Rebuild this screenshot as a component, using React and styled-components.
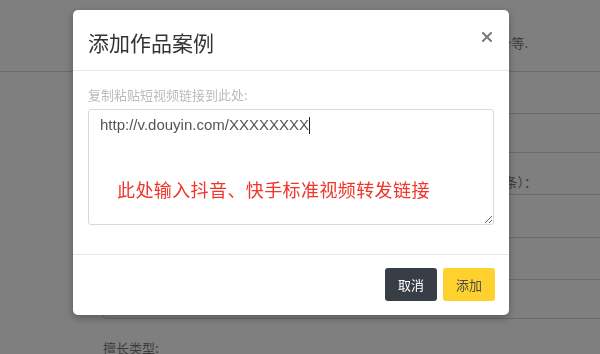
import React from 'react';
import styled, { createGlobalStyle } from 'styled-components';

const GlobalStyle = createGlobalStyle`
  html, body {
    margin: 0;
    padding: 0;
    background: #fff;
  }
  body {
    font-family: "Noto Sans CJK SC", "Liberation Sans", sans-serif;
  }
`;

const Page = styled.div`
  width: 600px;
  height: 354px;
  overflow: hidden;
  background: #fff;
`;

const PageHeader = styled.div`
  padding: 6px 0 19px;
  border-bottom: 1px solid #d6d6d6;
`;

const PageTitle = styled.div`
  padding-left: 353px;
  font-size: 18px;
  line-height: 24px;
  font-weight: bold;
  color: #444;
`;

const PageDesc = styled.div`
  margin-top: 4px;
  padding-right: 72px;
  text-align: right;
  font-size: 13px;
  line-height: 18px;
  color: #777;
  white-space: nowrap;
`;

const Form = styled.div`
  padding-left: 103px;
`;

const FieldLabel = styled.div`
  display: flex;
  justify-content: ${(p) => (p.$width ? 'flex-end' : 'flex-start')};
  width: ${(p) => (p.$width ? `${p.$width}px` : 'auto')};
  height: 41px;
  box-sizing: border-box;
  padding-top: 20px;
  font-size: 13px;
  line-height: 18px;
  color: #777;
  white-space: nowrap;
`;

const FieldInput = styled.div`
  width: 560px;
  height: ${(p) => p.$h}px;
  box-sizing: border-box;
  border: 1px solid #d4d4d4;
  border-radius: 3px;
`;

const Overlay = styled.div`
  position: fixed;
  inset: 0;
  background: rgba(0, 0, 0, 0.5);
  display: flex;
  align-items: flex-start;
  padding: 10px 0 0 73px;
`;

const Modal = styled.div`
  width: 436px;
  background: #fff;
  border-radius: 5px;
  box-shadow: 0 3px 9px rgba(0, 0, 0, 0.3);
  display: flex;
  flex-direction: column;
`;

const ModalHeader = styled.div`
  display: flex;
  justify-content: space-between;
  align-items: flex-start;
  height: 61px;
  box-sizing: border-box;
  padding: 17px 17px 0 15px;
  border-bottom: 1px solid #e8e8e8;
`;

const ModalTitle = styled.div`
  font-size: 21px;
  line-height: 30px;
  color: #333;
`;

const CloseButton = styled.button`
  margin-top: 5px;
  width: 10px;
  height: 10px;
  padding: 0;
  border: none;
  background: none;
  display: flex;
  cursor: pointer;
`;

const ModalBody = styled.div`
  padding: 15px 15px 29px;
`;

const FieldHint = styled.div`
  font-size: 13px;
  line-height: 18px;
  color: #bbb;
  margin-bottom: 5px;
`;

const AreaWrap = styled.div`
  position: relative;
  height: 116px;
`;

const LinkArea = styled.textarea`
  display: block;
  width: 100%;
  height: 100%;
  box-sizing: border-box;
  margin: 0;
  padding: 5px 11px;
  border: 1px solid #d9d9d9;
  border-radius: 3px;
  font-family: "Liberation Sans", Arial, sans-serif;
  font-size: 15px;
  line-height: 20px;
  color: #555;
  outline: none;
`;

const Mirror = styled.div`
  position: absolute;
  inset: 0;
  padding: 6px 12px;
  pointer-events: none;
  font-family: "Liberation Sans", Arial, sans-serif;
  font-size: 15px;
  line-height: 20px;
`;

const Ghost = styled.span`
  color: transparent;
`;

const Caret = styled.span`
  display: inline-block;
  width: 1px;
  height: 17px;
  background: #222;
  vertical-align: -4px;
`;

const Annotation = styled.div`
  margin: 42px 0 0 17px;
  font-family: "Noto Sans CJK SC", sans-serif;
  font-size: 18px;
  line-height: 24px;
  letter-spacing: 0.4px;
  color: #f0352b;
`;

const ModalFooter = styled.div`
  display: flex;
  justify-content: flex-end;
  gap: 6px;
  padding: 13px 14px 14px;
  border-top: 1px solid #e8e8e8;
`;

const Button = styled.button`
  width: 52px;
  height: 33px;
  padding: 0;
  border: none;
  border-radius: 3px;
  font-family: "Noto Sans CJK SC", sans-serif;
  font-size: 13px;
  background: ${(p) => (p.$primary ? '#ffd12e' : '#383e46')};
  color: ${(p) => (p.$primary ? '#4a4a4a' : '#fff')};
  cursor: pointer;
`;

const url = 'http://v.douyin.com/XXXXXXXX';

const App = () => {
  return (
    <>
      <GlobalStyle />
      <Page>
        <PageHeader>
          <PageTitle>个人设置</PageTitle>
          <PageDesc>请完善您的个人资料，包括擅长类型、作品案例、报价等.</PageDesc>
        </PageHeader>
        <Form>
          <FieldLabel>昵称：</FieldLabel>
          <FieldInput $h={40} />
          <FieldLabel $width={434}>
            <span>近三个月内发布的作品总数量（单位：条）：</span>
          </FieldLabel>
          <FieldInput $h={44} />
          <FieldLabel>粉丝数量：</FieldLabel>
          <FieldInput $h={40} />
          <FieldLabel>擅长类型:</FieldLabel>
        </Form>
      </Page>
      <Overlay>
        <Modal>
          <ModalHeader>
            <ModalTitle>添加作品案例</ModalTitle>
            <CloseButton aria-label="关闭">
              <svg width="10" height="10" viewBox="0 0 10 10">
                <path d="M1 1L9 9M9 1L1 9" stroke="#7a7a7a" strokeWidth="2" strokeLinecap="square" />
              </svg>
            </CloseButton>
          </ModalHeader>
          <ModalBody>
            <FieldHint>复制粘贴短视频链接到此处:</FieldHint>
            <AreaWrap>
              <LinkArea defaultValue={url} />
              <Mirror>
                <div>
                  <Ghost>{url}</Ghost>
                  <Caret />
                </div>
                <Annotation>此处输入抖音、快手标准视频转发链接</Annotation>
              </Mirror>
            </AreaWrap>
          </ModalBody>
          <ModalFooter>
            <Button>取消</Button>
            <Button $primary>添加</Button>
          </ModalFooter>
        </Modal>
      </Overlay>
    </>
  );
};

export default App;
